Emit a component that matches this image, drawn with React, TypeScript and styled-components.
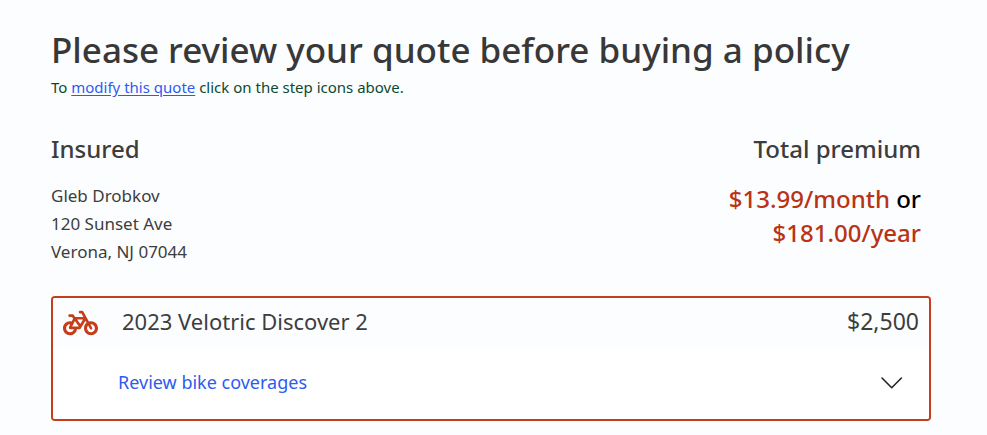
import React from "react";
import styled, { createGlobalStyle } from "styled-components";
import { FaBicycle } from "react-icons/fa6";

const GlobalStyle = createGlobalStyle`
  *, *::before, *::after { box-sizing: border-box; }
  body {
    margin: 0;
    background: #fcfdff;
    color: #3d3d3d;
    font-family: "Noto Sans", "Open Sans", sans-serif;
  }
`;

const Page = styled.main`
  padding: 28px 56px 14px 51px;
`;

const Title = styled.h1`
  margin: 0;
  font-size: 35px;
  line-height: 44px;
  font-weight: 500;
  color: #383838;
`;

const Hint = styled.p`
  margin: 3px 0 0;
  font-size: 15px;
  line-height: 24px;
  color: #0b4a2f;
`;

const HintLink = styled.a`
  color: #2d5bf0;
  text-underline-offset: 2px;
`;

const Summary = styled.section`
  display: flex;
  justify-content: space-between;
  margin-top: 33px;
  padding-right: 10px;
`;

const Column = styled.div<{ $end?: boolean }>`
  text-align: ${({ $end }) => ($end ? "right" : "left")};
`;

const Heading = styled.h2`
  margin: 0;
  font-size: 24px;
  line-height: 34px;
  font-weight: 500;
`;

const Address = styled.address`
  margin-top: 16px;
  font-size: 17px;
  line-height: 28px;
  font-style: normal;
`;

const Prices = styled.p`
  margin: 16px 0 0;
  font-size: 24px;
  line-height: 34px;
  font-weight: 500;
  color: #000;
`;

const Price = styled.span`
  color: #ba3315;
`;

const Card = styled.section`
  margin-top: 30px;
  border: 2px solid #c63d1a;
  border-radius: 4px;
  background: #fff;
  overflow: hidden;
`;

const CardHeader = styled.header`
  display: flex;
  align-items: flex-start;
  padding: 7px 10px 10px;
  background: #fcfdff;
`;

const BikeIcon = styled(FaBicycle)`
  width: 35px;
  height: 28px;
  margin-top: 4px;
  color: #c63d1a;
`;

const CardTitle = styled.h3`
  flex: 1;
  margin: 0 0 0 24px;
  font-size: 22px;
  line-height: 32px;
  font-weight: 400;
`;

const Amount = styled.span`
  font-size: 23px;
  line-height: 32px;
`;

const Toggle = styled.button`
  display: flex;
  align-items: center;
  justify-content: space-between;
  width: 100%;
  height: 72px;
  padding: 0 26px 2px 65px;
  border: 0;
  background: #fff;
  color: #2d5bf0;
  font-family: inherit;
  font-size: 18px;
  line-height: 24px;
  text-align: left;
  cursor: pointer;
`;

const Chevron = styled.svg`
  width: 24px;
  height: 24px;
  fill: none;
  stroke: #212529;
  stroke-width: 1.6;
  stroke-linecap: round;
  stroke-linejoin: round;
`;

export default function App() {
  return (
    <>
      <GlobalStyle />
      <Page>
        <Title>Please review your quote before buying a policy</Title>
        <Hint>
          To <HintLink href="#modify">modify this quote</HintLink> click on the step icons above.
        </Hint>
        <Summary>
          <Column>
            <Heading>Insured</Heading>
            <Address>
              Gleb Drobkov
              <br />
              120 Sunset Ave
              <br />
              Verona, NJ 07044
            </Address>
          </Column>
          <Column $end>
            <Heading>Total premium</Heading>
            <Prices>
              <Price>$13.99/month</Price> or
              <br />
              <Price>$181.00/year</Price>
            </Prices>
          </Column>
        </Summary>
        <Card>
          <CardHeader>
            <BikeIcon aria-hidden="true" />
            <CardTitle>2023 Velotric Discover 2</CardTitle>
            <Amount>$2,500</Amount>
          </CardHeader>
          <Toggle type="button" aria-expanded="false">
            Review bike coverages
            <Chevron viewBox="0 0 24 24" aria-hidden="true">
              <path d="M3 8l9.700 9.700L22.400 8" />
            </Chevron>
          </Toggle>
        </Card>
      </Page>
    </>
  );
}
